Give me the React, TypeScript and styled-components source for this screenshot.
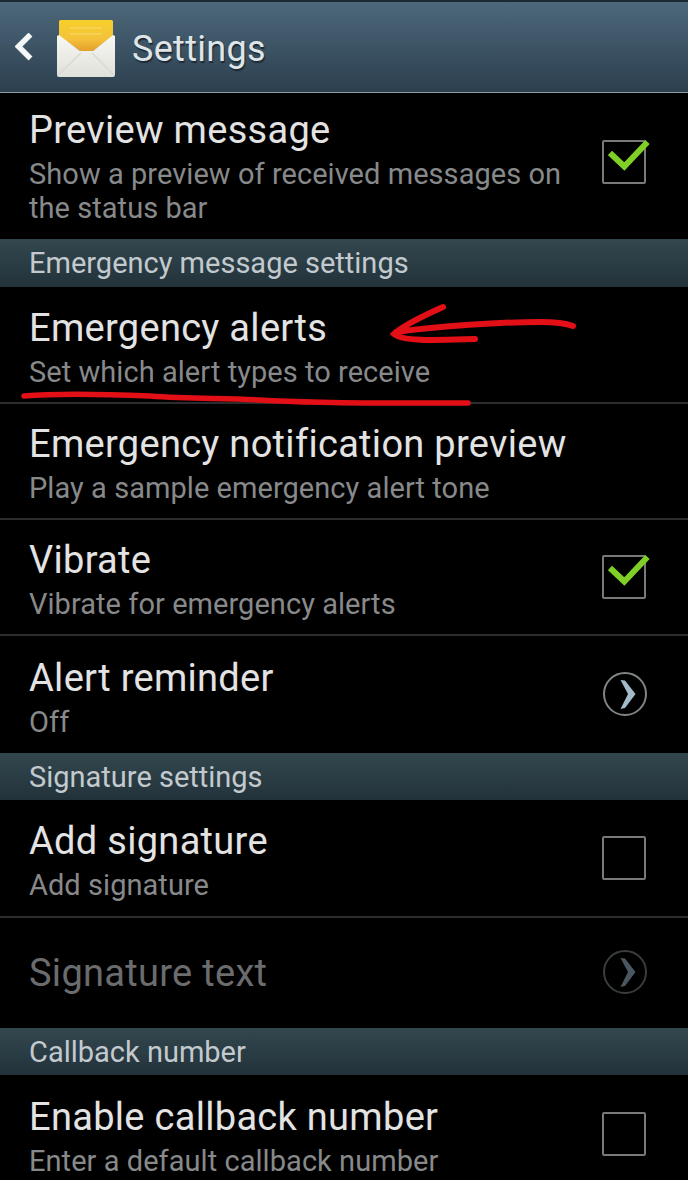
import React from 'react';
import styled, { createGlobalStyle } from 'styled-components';

const GlobalStyle = createGlobalStyle`
  html, body {
    margin: 0;
    padding: 0;
    background: #000;
    font-family: Roboto, "Liberation Sans", sans-serif;
  }
`;

const Screen = styled.div`
  position: relative;
  width: 688px;
  height: 1180px;
  overflow: hidden;
  background: #000;
`;

const Header = styled.header`
  box-sizing: border-box;
  height: 93px;
  display: flex;
  align-items: center;
  padding: 2px 0 0 15px;
  background: linear-gradient(#4c687b, #2c3f4e);
  border-top: 2px solid #1c2a36;
  border-bottom: 1px solid #8f9aa1;
`;

const BackIcon = styled.svg`
  width: 20px;
  height: 30px;
  margin-right: 22px;
`;

const MailIcon = styled.svg`
  width: 58px;
  height: 57px;
  margin-right: 17px;
`;

const HeaderTitle = styled.h1`
  margin: 0;
  padding-top: 2px;
  font-size: 36px;
  font-weight: 400;
  letter-spacing: 0.3px;
  color: #dfe5e8;
  text-shadow: 1px 2px 1px #1d2a33;
`;

const Section = styled.div<{ $height: number }>`
  box-sizing: border-box;
  height: ${(p) => p.$height}px;
  display: flex;
  align-items: center;
  padding-left: 29px;
  font-size: 29px;
  color: #c3cace;
  background: linear-gradient(#33474f, #22323a);
`;

const Row = styled.div<{ $height: number; $last?: boolean }>`
  box-sizing: border-box;
  height: ${(p) => p.$height}px;
  display: flex;
  align-items: center;
  justify-content: space-between;
  padding: 0 42px 0 29px;
  border-bottom: ${(p) => (p.$last ? 'none' : '2px solid #2a2c2d')};
`;

const RowText = styled.div<{ $flush?: boolean }>`
  min-width: 0;
  padding-top: ${(p) => (p.$flush ? 0 : 5)}px;
`;

const Title = styled.div<{ $disabled?: boolean }>`
  font-size: 38px;
  line-height: 44px;
  letter-spacing: 0.3px;
  color: ${(p) => (p.$disabled ? '#6a6c6d' : '#e3e3e3')};
`;

const Subtitle = styled.div`
  width: 540px;
  margin-top: 5px;
  font-size: 29px;
  line-height: 34px;
  letter-spacing: 0.05px;
  color: #87898a;
`;

const Checkbox = styled.div<{ $raised?: boolean }>`
  position: relative;
  flex: none;
  box-sizing: border-box;
  width: 44px;
  height: 44px;
  margin-bottom: ${(p) => (p.$raised ? 8 : 0)}px;
  border: 2px solid #77797a;
  border-radius: 2px;
`;

const Tick = styled.svg`
  position: absolute;
  left: 4px;
  top: -5px;
  width: 44px;
  height: 36px;
`;

const Arrow = styled.svg`
  flex: none;
  width: 46px;
  height: 46px;
  margin: 0 -2px 2px 0;
`;

const Annotation = styled.svg`
  position: absolute;
  left: 0;
  top: 0;
  width: 688px;
  height: 1180px;
  pointer-events: none;
`;

const Check = ({ checked, raised }: { checked?: boolean; raised?: boolean }) => (
  <Checkbox $raised={raised}>
    {checked && (
      <Tick viewBox="0 0 44 36">
        <path d="M2 16 L16.3 29.5 L39.5 5" fill="none" stroke="#7fcf26" strokeWidth="6" />
      </Tick>
    )}
  </Checkbox>
);

const Chevron = ({ disabled }: { disabled?: boolean }) => (
  <Arrow viewBox="0 0 46 46">
    <circle cx="23" cy="23" r="21" fill="none" stroke={disabled ? '#3a3c3d' : '#7f8485'} strokeWidth="2" />
    <path
      d="M18.5 9 L23 9.5 L33.5 23 L23 37 L18.5 38 L26 23 Z"
      fill={disabled ? '#4a5760' : '#a3bbc9'}
    />
  </Arrow>
);

const App = () => {
  return (
    <Screen>
      <GlobalStyle />
      <Header>
        <BackIcon viewBox="0 0 20 30">
          <path d="M15.5 1.5 L3.5 13.5 L15.5 25.5" fill="none" stroke="#f4f6f7" strokeWidth="5.5" />
        </BackIcon>
        <MailIcon viewBox="0 0 58 57">
          <defs>
            <linearGradient id="flap" x1="0" y1="0" x2="0" y2="1">
              <stop offset="0" stopColor="#f7d02c" />
              <stop offset="0.6" stopColor="#f4c23a" />
              <stop offset="1" stopColor="#e49f2c" />
            </linearGradient>
            <linearGradient id="body" x1="0" y1="0" x2="0" y2="1">
              <stop offset="0" stopColor="#f8f8f4" />
              <stop offset="1" stopColor="#dfe0d9" />
            </linearGradient>
          </defs>
          <path d="M2 1.5 Q2 0 3.5 0 H54.5 Q56 0 56 1.5 V16 L36 31 H23 L2 16 Z" fill="url(#flap)" />
          <path d="M13 8 H45 M13 14 H45" stroke="#f9dc6c" strokeWidth="1.2" />
          <path
            d="M0 16 L2 15 L23 31 H36 L56 15 L58 16 V55 Q58 57 56 57 H2 Q0 57 0 55 Z"
            fill="url(#body)"
          />
          <path d="M1 55 L24 33 M57 55 L35 33" stroke="#d9dad3" strokeWidth="1.5" fill="none" />
        </MailIcon>
        <HeaderTitle>Settings</HeaderTitle>
      </Header>

      <Row $height={146} $last>
        <RowText $flush>
          <Title>Preview message</Title>
          <Subtitle>Show a preview of received messages on the status bar</Subtitle>
        </RowText>
        <Check checked raised />
      </Row>
      <Section $height={48}>Emergency message settings</Section>
      <Row $height={117}>
        <RowText>
          <Title>Emergency alerts</Title>
          <Subtitle>Set which alert types to receive</Subtitle>
        </RowText>
      </Row>
      <Row $height={116}>
        <RowText>
          <Title>Emergency notification preview</Title>
          <Subtitle>Play a sample emergency alert tone</Subtitle>
        </RowText>
      </Row>
      <Row $height={116}>
        <RowText>
          <Title>Vibrate</Title>
          <Subtitle>Vibrate for emergency alerts</Subtitle>
        </RowText>
        <Check checked />
      </Row>
      <Row $height={117} $last>
        <RowText>
          <Title>Alert reminder</Title>
          <Subtitle>Off</Subtitle>
        </RowText>
        <Chevron />
      </Row>
      <Section $height={47}>Signature settings</Section>
      <Row $height={118}>
        <RowText>
          <Title>Add signature</Title>
          <Subtitle>Add signature</Subtitle>
        </RowText>
        <Check />
      </Row>
      <Row $height={110} $last>
        <RowText $flush>
          <Title $disabled>Signature text</Title>
        </RowText>
        <Chevron disabled />
      </Row>
      <Section $height={47}>Callback number</Section>
      <Row $height={117} $last>
        <RowText>
          <Title>Enable callback number</Title>
          <Subtitle>Enter a default callback number</Subtitle>
        </RowText>
        <Check />
      </Row>

      <Annotation viewBox="0 0 688 1180">
        <path
          d="M443 307 C425 315 404 325 394 334 C402 342 440 340 475 339 M396 332 C440 326 500 322 540 322 C555 322 565 323 573 326"
          fill="none"
          stroke="#e30f16"
          strokeWidth="6"
          strokeLinecap="round"
        />
        <path
          d="M24 396 C60 393 100 394 150 396 C190 399 220 398 260 400 C320 404 400 403 468 403"
          fill="none"
          stroke="#e30f16"
          strokeWidth="5.5"
          strokeLinecap="round"
        />
      </Annotation>
    </Screen>
  );
};

export default App;
